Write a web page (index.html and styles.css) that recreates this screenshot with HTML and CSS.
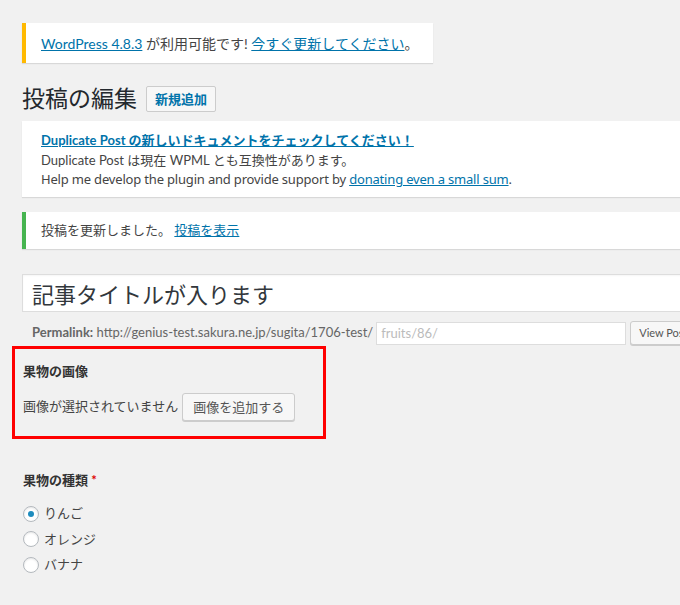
FILE: index.html
```html
<!DOCTYPE html>
<html lang="ja">
<head>
    <meta charset="UTF-8">
    <meta name="viewport" content="width=device-width, initial-scale=1.0">
    <title>投稿の編集</title>
    <link rel="stylesheet" href="styles.css">
</head>
<body>
    <div class="wrap">
        <!-- 更新のお知らせ -->
        <div class="update-nag">
            <a href="#">WordPress 4.8.3</a> が利用可能です! <a href="#">今すぐ更新してください</a>。
        </div>

        <div class="page-head">
            <h1>投稿の編集</h1>
            <a href="#" class="page-title-action">新規追加</a>
        </div>

        <div class="notice">
            <p><a href="#" class="strong-link">Duplicate Post の新しいドキュメントをチェックしてください！</a></p>
            <p>Duplicate Post は現在 WPML とも互換性があります。</p>
            <p class="wide-text">Help me develop the plugin and provide support by <a href="#">donating even a small sum</a>.</p>
        </div>

        <div class="notice notice-success">
            <p>投稿を更新しました。 <a href="#">投稿を表示</a></p>
        </div>

        <input type="text" class="title-input" value="記事タイトルが入ります">

        <div class="slug-box">
            <strong>Permalink:</strong>&nbsp;<span>http://genius-test.sakura.ne.jp/sugita/1706-test/</span>
            <input type="text" class="slug-input" value="fruits/86/">
            <button class="button button-small">View Post</button>
        </div>

        <!-- 画像フィールド（赤枠） -->
        <div class="field field-marked">
            <div class="field-label">果物の画像</div>
            <div class="image-row">
                <span>画像が選択されていません</span>
                <button class="button">画像を追加する</button>
            </div>
        </div>

        <div class="field">
            <div class="field-label">果物の種類 <span class="required">*</span></div>
            <ul class="radio-list">
                <li><label><input type="radio" name="fruit" checked> りんご</label></li>
                <li><label><input type="radio" name="fruit"> オレンジ</label></li>
                <li><label><input type="radio" name="fruit"> バナナ</label></li>
            </ul>
        </div>
    </div>
</body>
</html>
```

FILE: styles.css
```css
:root {
    --bg: #f1f1f1;
    --text: #444;
    --link: #0073aa;
    --border: #ddd;
    --button-border: #ccc;
}

* {
    margin: 0;
    padding: 0;
    box-sizing: border-box;
}

html, body {
    overflow: hidden;
}

body {
    background: var(--bg);
    color: var(--text);
    font-family: Lato, "Noto Sans CJK JP", sans-serif;
    font-size: 13px;
    line-height: 19.5px;
}

a {
    color: var(--link);
}

.wrap {
    width: 900px;
    padding: 23px 0 0 22px;
}

.update-nag {
    display: inline-block;
    background: #fff;
    border-left: 4px solid #ffb900;
    box-shadow: 0 1px 1px 0 rgba(0, 0, 0, 0.1);
    padding: 11px 15px 10px;
    font-size: 14px;
    line-height: 19px;
}

.page-head {
    display: flex;
    align-items: center;
    gap: 9px;
    margin-top: 18px;
    height: 35px;
}

h1 {
    font-size: 23px;
    font-weight: 400;
    color: #23282d;
    line-height: 29px;
}

.page-title-action {
    display: inline-block;
    height: 26px;
    padding: 0 8px;
    border: 1px solid var(--button-border);
    border-radius: 2px;
    background: #f7f7f7;
    color: var(--link);
    font-weight: 600;
    line-height: 24px;
    text-decoration: none;
}

.notice {
    margin-top: 5px;
    background: #fff;
    border-left: 4px solid #fff;
    box-shadow: 0 1px 1px 0 rgba(0, 0, 0, 0.1);
    padding: 10px 15px 7px;
}

.strong-link {
    font-weight: 700;
}

.wide-text {
    font-family: "Noto Sans", "Noto Sans CJK JP", sans-serif;
    letter-spacing: -0.18px;
}

.notice-success {
    margin-top: 15px;
    border-left-color: #46b450;
    padding: 9px 15px;
}

.title-input {
    display: block;
    width: 100%;
    height: 38px;
    margin-top: 25px;
    padding: 0 9px;
    border: 1px solid var(--border);
    background: #fff;
    color: #32373c;
    font-family: inherit;
    font-size: 22px;
    outline: none;
    box-shadow: inset 0 1px 2px rgba(0, 0, 0, 0.04);
}

.slug-box {
    display: flex;
    align-items: center;
    height: 24px;
    margin-top: 9px;
    padding-left: 10px;
    color: #666;
    white-space: nowrap;
}

.slug-input {
    width: 250px;
    height: 23px;
    margin-left: 3px;
    padding: 0 4px;
    border: 1px solid var(--border);
    background: #fff;
    color: #bbb;
    font-family: inherit;
    font-size: 13px;
    outline: none;
}

.button {
    height: 28px;
    padding: 0 10px;
    border: 1px solid var(--button-border);
    border-radius: 3px;
    background: #f7f7f7;
    box-shadow: 0 1px 0 #ccc;
    color: #555;
    font-family: inherit;
    font-size: 13px;
    line-height: 26px;
    white-space: nowrap;
}

.button-small {
    height: 24px;
    margin-left: 4px;
    padding: 0 8px;
    font-size: 11px;
    line-height: 22px;
}

.field {
    padding: 14px 0 0 1px;
    margin-top: 18px;
}

.field-marked {
    width: 314px;
    margin: 1px 0 0 -10px;
    padding: 13px 8px 15px 8px;
    border: 3px solid #f00;
}

.field-label {
    font-weight: 700;
    color: #333;
}

.required {
    color: #d00;
}

.image-row {
    display: flex;
    align-items: center;
    gap: 4px;
    margin-top: 11px;
}

.radio-list {
    list-style: none;
    margin-top: 14px;
}

.radio-list li {
    height: 25.5px;
}

.radio-list label {
    display: flex;
    align-items: center;
    gap: 5px;
}

.radio-list input {
    appearance: none;
    -webkit-appearance: none;
    width: 16px;
    height: 16px;
    border: 1px solid #b4b9be;
    border-radius: 50%;
    background: #fff;
    box-shadow: inset 0 1px 2px rgba(0, 0, 0, 0.1);
    display: grid;
    place-items: center;
}

.radio-list input:checked::before {
    content: "";
    width: 6px;
    height: 6px;
    border-radius: 50%;
    background: #1e8cbe;
}
```
